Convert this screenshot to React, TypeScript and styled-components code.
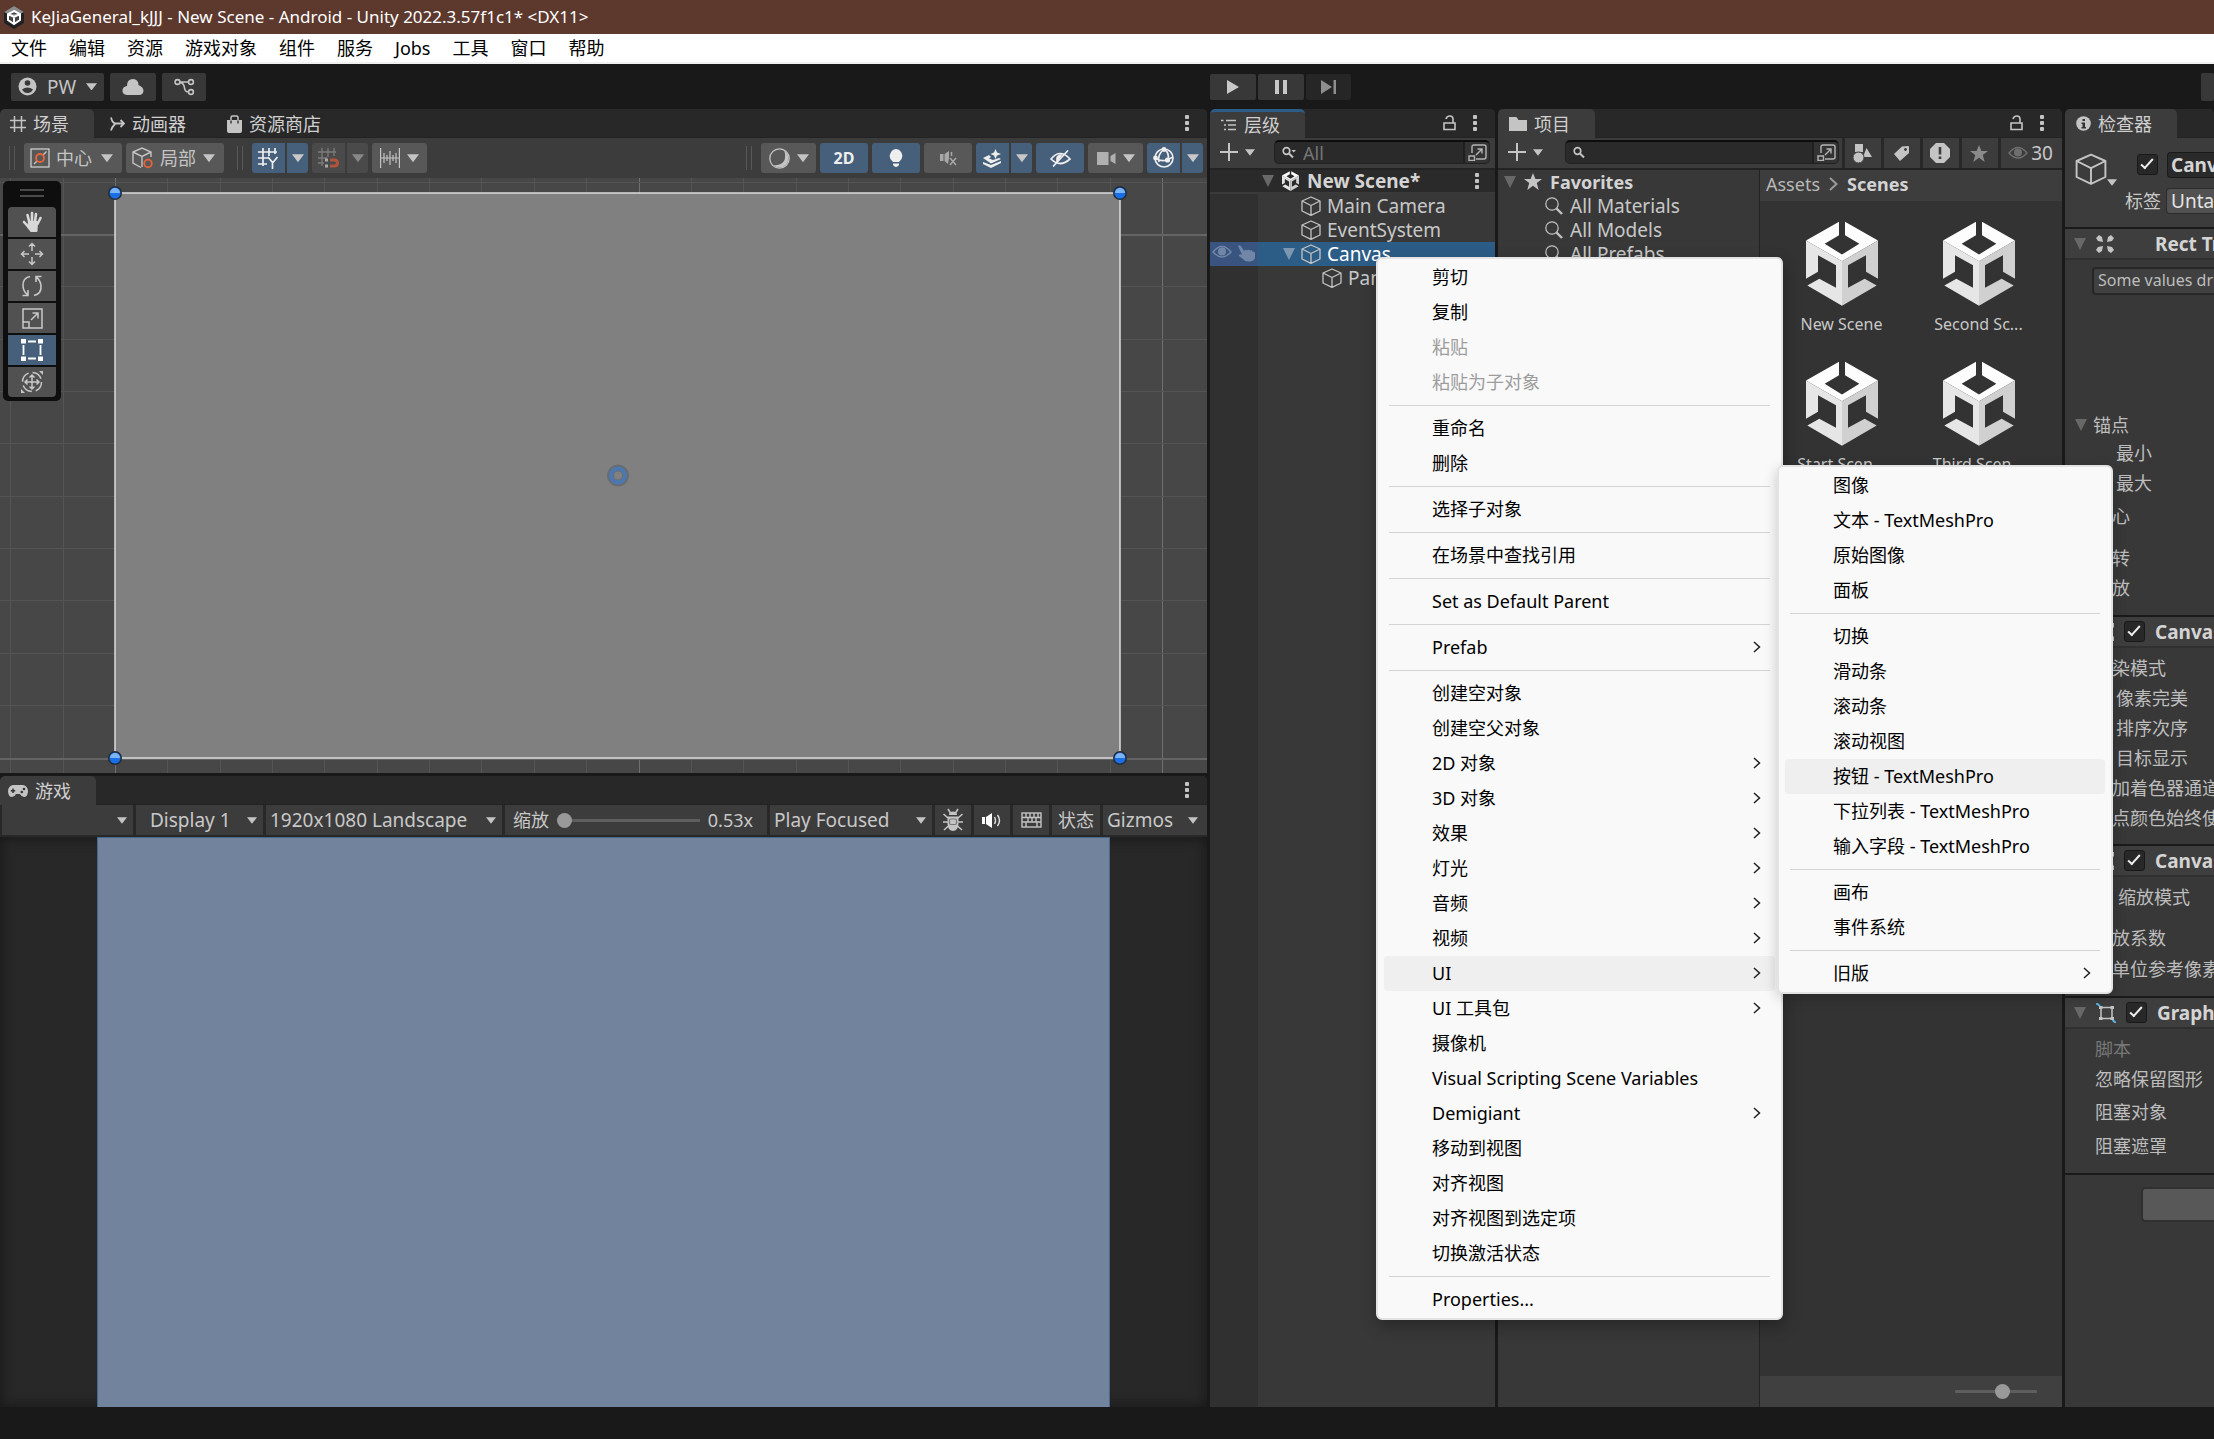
import React from 'react';
import styled, { createGlobalStyle, css } from 'styled-components';

const UI_FONT = '"Noto Sans", "Noto Sans CJK SC", sans-serif';
const COLUMNS = '1207fr 285fr 564fr 149fr';

const Global = createGlobalStyle`
  *, *::before, *::after { box-sizing: border-box; }
  html, body { margin: 0; padding: 0; background: #191919; }
  body { font-family: ${UI_FONT}; font-size: 18px; line-height: 24px; color: #c8c8c8; overflow: hidden; }
  button, input, select { font: inherit; color: inherit; margin: 0; border: 0; background: none; padding: 0; }
  ul { list-style: none; margin: 0; padding: 0; }
  h1, h2, p { margin: 0; font: inherit; }
  svg { display: block; flex: none; }
`;

/* ---------- shell ---------- */

const Shell = styled.div`
  position: relative;
  display: flex;
  flex-direction: column;
  height: 100vh;
  background: #191919;
  overflow: hidden;
`;

const TitleBar = styled.header`
  display: flex;
  align-items: center;
  gap: 7px;
  height: 34px;
  padding: 0 4px;
  background: #5c382d;
  color: #fff;
  font-size: 17px;
  white-space: nowrap;
`;

const MenuBar = styled.nav`
  display: flex;
  align-items: center;
  gap: 22px;
  height: 30px;
  padding: 0 11px;
  background: #fff;
  border-bottom: 2px solid #f0f0f0;
  color: #000;
`;

const MenuBarItem = styled.button`
  line-height: 28px;
  white-space: nowrap;
`;

const TopToolbar = styled.div`
  display: grid;
  grid-template-columns: ${COLUMNS};
  column-gap: 3px;
  align-items: center;
  height: 45px;
`;

const ToolbarGroup = styled.div<{ $gap: number; $pad?: number; $end?: boolean }>`
  display: flex;
  align-items: center;
  gap: ${p => p.$gap}px;
  padding-left: ${p => p.$pad ?? 0}px;
  justify-content: ${p => (p.$end ? 'flex-end' : 'flex-start')};
`;

const DarkButton = styled.button<{ $w: number; $dim?: boolean; $h?: number }>`
  display: flex;
  align-items: center;
  justify-content: center;
  gap: 10px;
  width: ${p => p.$w}px;
  height: ${p => p.$h ?? 28}px;
  background: ${p => (p.$dim ? '#262626' : '#383838')};
  border-radius: 2px;
  color: #c4c4c4;
  font-size: 19px;
`;

const Workspace = styled.main`
  flex: 1;
  min-height: 0;
  display: grid;
  grid-template-columns: ${COLUMNS};
  column-gap: 3px;
`;

const LeftColumn = styled.div`
  display: grid;
  grid-template-rows: 664fr 631fr;
  row-gap: 3px;
  min-width: 0;
  min-height: 0;
`;

const StatusBar = styled.footer`
  height: 32px;
  background: #191919;
`;

/* ---------- panels ---------- */

const Panel = styled.section`
  display: flex;
  flex-direction: column;
  min-width: 0;
  min-height: 0;
  background: #383838;
  border-radius: 5px 5px 0 0;
  overflow: hidden;
`;

const TabStrip = styled.div`
  display: flex;
  align-items: stretch;
  flex: none;
  height: 29px;
  background: #282828;
  border-bottom: 1px solid #232323;
`;

const Tab = styled.button<{ $active?: boolean; $focused?: boolean; $pad?: number }>`
  display: flex;
  align-items: center;
  gap: 7px;
  height: 29px;
  padding: 0 25px 0 ${p => p.$pad ?? 11}px;
  border-radius: 5px 5px 0 0;
  border-top: ${p => (p.$focused ? '3px solid #2c5d87' : '0')};
  background: ${p => (p.$active ? '#3c3c3c' : 'transparent')};
  color: #d0d0d0;
  white-space: nowrap;
`;

const StripActions = styled.div`
  display: flex;
  align-items: center;
  gap: 17px;
  margin-left: auto;
  padding-right: 18px;
`;

const IconButton = styled.button`
  display: flex;
  align-items: center;
  justify-content: center;
`;

const SceneToolbar = styled.div`
  display: flex;
  align-items: center;
  justify-content: space-between;
  flex: none;
  height: 40px;
  padding: 0 4px 0 9px;
  background: #3c3c3c;
`;

const ToolSet = styled.div`
  display: flex;
  align-items: center;
  gap: 4px;
`;

const Grip = styled.span<{ $before?: number }>`
  width: 6px;
  height: 24px;
  margin: 0 5px 0 ${p => p.$before ?? 0}px;
  border: solid #585858;
  border-width: 0 1px;
`;

const ToolButton = styled.button<{ $w: number; $on?: boolean; $off?: boolean; $side?: 'l' | 'r' }>`
  display: flex;
  align-items: center;
  justify-content: center;
  gap: 7px;
  width: ${p => p.$w}px;
  height: 30px;
  background: ${p => (p.$on ? '#46607c' : p.$off ? '#4a4a4a' : '#585858')};
  border-radius: ${p => (p.$side === 'l' ? '3px 0 0 3px' : p.$side === 'r' ? '0 3px 3px 0' : '3px')};
  color: ${p => (p.$on ? '#eee' : p.$off ? '#888' : '#c4c4c4')};
  font-size: 16px;
  font-weight: 700;
`;

const Split = styled.div`
  display: flex;
  gap: 2px;
`;

const PickField = styled.label<{ $w: number }>`
  display: flex;
  align-items: center;
  gap: 6px;
  width: ${p => p.$w}px;
  height: 30px;
  padding: 0 9px 0 6px;
  background: #585858;
  border-radius: 3px;
  color: #c4c4c4;
`;

const Picker = styled.select`
  flex: 1;
  min-width: 0;
  height: 100%;
  appearance: none;
  outline: none;
  text-overflow: clip;
`;

const SceneCanvas = styled.div`
  position: relative;
  flex: 1;
  min-height: 0;
  background: #474747;
  overflow: hidden;
`;

const SceneDrawing = styled.svg`
  width: 100%;
  height: 100%;
`;

const ToolOverlay = styled.div`
  position: absolute;
  left: 3px;
  top: 3px;
  display: flex;
  flex-direction: column;
  gap: 2px;
  padding: 0 5px 4px;
  width: 58px;
  background: #0e0e0e;
  border-radius: 5px;
`;

const OverlayGrip = styled.span`
  align-self: center;
  width: 24px;
  height: 8px;
  margin: 8px 0;
  border: solid #4a4a4a;
  border-width: 2px 0;
`;

const OverlayTool = styled.button<{ $on?: boolean }>`
  display: flex;
  align-items: center;
  justify-content: center;
  height: 30px;
  background: ${p => (p.$on ? '#46607c' : '#515151')};
  color: ${p => (p.$on ? '#fff' : '#c4c4c4')};
  &:nth-of-type(1) { border-radius: 4px 4px 0 0; }
  &:last-child { border-radius: 0 0 4px 4px; }
`;

/* ---------- game view ---------- */

const GameToolbar = styled.div`
  display: flex;
  flex: none;
  gap: 3px;
  height: 32px;
  padding: 0 0 2px 2px;
  background: #282828;
  font-size: 19px;
`;

const GameCell = styled.label<{ $w: number }>`
  display: flex;
  align-items: center;
  flex: none;
  width: ${p => p.$w}px;
  height: 30px;
  padding: 0 6px 0 4px;
  background: #3c3c3c;
  white-space: nowrap;
`;

const DisplayCell = styled(GameCell)`
  padding-left: 14px;
`;

const ScaleCell = styled.label`
  display: flex;
  align-items: center;
  flex: 1;
  gap: 8px;
  height: 30px;
  padding: 0 14px 0 8px;
  background: #3c3c3c;
  font-size: 18px;
  white-space: nowrap;
`;

const GameButton = styled.button<{ $w: number; $spread?: boolean }>`
  display: flex;
  align-items: center;
  justify-content: ${p => (p.$spread ? 'space-between' : 'center')};
  flex: none;
  width: ${p => p.$w}px;
  height: 30px;
  padding: ${p => (p.$spread ? '0 9px 0 4px' : '0')};
  background: #3c3c3c;
  font-size: ${p => (p.$spread ? 19 : 18)}px;
`;

const Slider = styled.input`
  flex: 1;
  min-width: 0;
  height: 16px;
  appearance: none;
  &::-webkit-slider-runnable-track { height: 3px; background: #5e5e5e; }
  &::-webkit-slider-thumb {
    appearance: none;
    width: 15px;
    height: 15px;
    margin-top: -6px;
    border-radius: 50%;
    background: #999;
  }
`;

const GameView = styled.div`
  display: flex;
  justify-content: center;
  flex: 1;
  min-height: 0;
  background: #282828;
  box-shadow: inset 0 0 14px #161616;
`;

const GameFrame = styled.div`
  height: 100%;
  aspect-ratio: 16 / 9;
  background: #71839d;
  border: solid #46678a;
  border-width: 1px 1px 0;
`;

/* ---------- hierarchy ---------- */

const PanelToolbar = styled.div`
  display: flex;
  align-items: center;
  flex: none;
  height: 32px;
  padding: 0 5px 2px 10px;
  background: #3c3c3c;
  border-bottom: 2px solid #232323;
`;

const AddButton = styled.button<{ $after?: number }>`
  display: flex;
  align-items: center;
  gap: 7px;
  margin-right: ${p => p.$after ?? 19}px;
`;

const SearchField = styled.label`
  display: flex;
  align-items: center;
  flex: 1;
  min-width: 0;
  gap: 6px;
  height: 24px;
  padding-left: 7px;
  background: #2a2a2a;
  border: 1px solid #212121;
  border-top: 2px solid #0d0d0d;
  border-radius: 5px;
`;

const SearchInput = styled.input`
  flex: 1;
  min-width: 0;
  height: 20px;
  outline: none;
  &::placeholder { color: #767676; opacity: 1; }
`;

const SearchWindow = styled.button`
  display: flex;
  align-items: center;
  justify-content: center;
  width: 26px;
  height: 21px;
  border-left: 2px solid #202020;
  background: #333;
  border-radius: 0 4px 4px 0;
`;

const SceneRow = styled.div`
  display: flex;
  align-items: center;
  gap: 7px;
  flex: none;
  height: 24px;
  padding: 0 16px 0 52px;
  background: #2a2a2a;
  border-bottom: 2px solid #3a3a3a;
  font-size: 19px;
  font-weight: 700;
  color: #d4d4d4;
`;

const Spacer = styled.span`
  flex: 1;
`;

const Tree = styled.ul`
  flex: 1;
  min-height: 0;
  background: linear-gradient(to right, #303030 48px, #383838 48px);
  font-size: 19px;
`;

const TreeRow = styled.li<{ $depth: number; $selected?: boolean }>`
  display: flex;
  align-items: center;
  gap: 6px;
  height: 24px;
  padding-bottom: 1px;
  padding-left: ${p => (p.$selected ? 2 : 91 + p.$depth * 21)}px;
  white-space: nowrap;
  ${p => p.$selected && css`
    background: linear-gradient(to right, #38547f 48px, #2c5d87 48px);
    color: #fff;
  `}
`;

const RowToggles = styled.span`
  display: flex;
  gap: 6px;
  width: 65px;
  color: #7287a8;
`;

/* ---------- project ---------- */

const ProjectToolbar = styled(PanelToolbar)`
  padding-right: 0;
`;

const FilterSet = styled.div`
  display: flex;
  align-self: stretch;
  margin-left: 3px;
  margin-bottom: -2px;
`;

const FilterButton = styled.button<{ $w: number }>`
  display: flex;
  align-items: center;
  justify-content: center;
  gap: 3px;
  width: ${p => p.$w}px;
  height: 30px;
  padding-right: 2px;
  border-left: 3px solid #282828;
  font-size: 19px;
`;

const ProjectBody = styled.div`
  display: grid;
  grid-template-columns: 262fr 302fr;
  flex: 1;
  min-height: 0;
`;

const Favorites = styled.ul`
  background: #383838;
  border-right: 1px solid #232323;
  min-width: 0;
  font-size: 19px;
`;

const FavoriteHead = styled.li`
  display: flex;
  align-items: center;
  gap: 8px;
  height: 24px;
  padding: 0 0 1px 6px;
  font-size: 18px;
  font-weight: 700;
  color: #d4d4d4;
`;

const FavoriteRow = styled.li`
  display: flex;
  align-items: center;
  gap: 7px;
  height: 24px;
  padding: 0 0 1px 47px;
`;

const AssetPane = styled.div`
  display: flex;
  flex-direction: column;
  min-width: 0;
  background: #333;
`;

const Breadcrumb = styled.nav`
  display: flex;
  align-items: center;
  gap: 9px;
  height: 31px;
  padding: 0 6px 4px;
  background: #3d3d3d;
`;

const Crumb = styled.a<{ $current?: boolean }>`
  color: ${p => (p.$current ? '#d4d4d4' : '#b8b8b8')};
  font-weight: ${p => (p.$current ? 700 : 400)};
  text-decoration: none;
`;

const AssetGrid = styled.div`
  display: grid;
  grid-template-columns: 137px 137px;
  grid-auto-rows: 140px;
  padding: 20px 0 0 13px;
  flex: 1;
`;

const Asset = styled.figure`
  display: flex;
  flex-direction: column;
  align-items: center;
  gap: 7px;
  margin: 0;
  font-size: 16px;
  line-height: 22px;
`;

const AssetFooter = styled.div`
  display: flex;
  justify-content: flex-end;
  align-items: center;
  height: 31px;
  padding-right: 25px;
  background: #404040;
`;

const SizeSlider = styled(Slider)`
  flex: none;
  width: 82px;
`;

/* ---------- inspector ---------- */

const ObjectHeader = styled.div`
  display: flex;
  gap: 8px;
  flex: none;
  height: 91px;
  padding: 14px 0 0 10px;
  background: #3c3c3c;
  border-bottom: 2px solid #1a1a1a;
`;

const ObjectIcon = styled.button`
  display: flex;
  align-items: center;
  height: 34px;
  & > svg:last-child { align-self: flex-end; }
`;

const ObjectFields = styled.div`
  display: flex;
  flex-direction: column;
  align-items: flex-end;
  gap: 11px;
  flex: 1;
  min-width: 0;
`;

const FieldLine = styled.label`
  display: flex;
  align-items: center;
  gap: 5px;
  height: 25px;
  white-space: nowrap;
`;

const CheckBox = styled.input`
  appearance: none;
  flex: none;
  position: relative;
  width: 21px;
  height: 21px;
  background: #282828;
  border: 1px solid #191919;
  border-radius: 3px;
  &:checked::after {
    content: '';
    position: absolute;
    left: 6px;
    top: 1px;
    width: 6px;
    height: 13px;
    border: solid #eee;
    border-width: 0 2px 2px 0;
    transform: rotate(42deg);
  }
`;

const NameInput = styled.input`
  width: 47px;
  height: 26px;
  margin-left: 4px;
  padding-left: 3px;
  background: #2a2a2a;
  border: 1px solid #1a1a1a;
  border-right: 0;
  border-radius: 4px 0 0 4px;
  font-size: 19px;
  font-weight: 700;
  color: #d4d4d4;
`;

const TagSelect = styled.select`
  appearance: none;
  width: 48px;
  height: 26px;
  padding-left: 4px;
  background: #515151;
  border: 1px solid #2c2c2c;
  border-right: 0;
  border-radius: 4px 0 0 4px;
  color: #e4e4e4;
  font-size: 19px;
  text-overflow: clip;
`;

const ComponentHeader = styled.h2`
  display: flex;
  align-items: center;
  flex: none;
  gap: 10px;
  height: 31px;
  padding-left: 9px;
  background: #3e3e3e;
  border-bottom: 2px solid #303030;
  font-size: 19px;
  font-weight: 700;
  color: #d4d4d4;
  white-space: nowrap;
`;

const RectTitle = styled.span`
  margin-left: 31px;
`;

const ComponentBody = styled.div<{ $h: number; $top?: number }>`
  flex: none;
  height: ${p => p.$h}px;
  padding-top: ${p => p.$top ?? 7}px;
  border-bottom: 2px solid #1a1a1a;
`;

const HelpBox = styled.p`
  height: 28px;
  margin: 0 -4px 117px 27px;
  padding-left: 4px;
  background: #404040;
  border: 2px solid #262626;
  border-radius: 4px;
  font-size: 16px;
  line-height: 22px;
  color: #bdbdbd;
  white-space: nowrap;
`;

const PropertyRow = styled.div<{ $indent?: number; $dim?: boolean; $h?: number }>`
  display: flex;
  align-items: center;
  gap: 6px;
  height: ${p => p.$h ?? 30}px;
  padding-left: ${p => p.$indent ?? 29}px;
  color: ${p => (p.$dim ? '#777' : '#bdbdbd')};
  white-space: nowrap;
`;

const AddComponent = styled.button`
  flex: none;
  height: 35px;
  margin: 12px 0 0 76px;
  background: #585858;
  border: 2px solid #303030;
  border-right: 0;
  border-radius: 4px 0 0 4px;
`;

/* ---------- context menus ---------- */

const menuBox = css`
  position: absolute;
  padding: 1px 0;
  background: #f9f9f9;
  border: 2px solid #e3e3e3;
  border-radius: 6px;
  box-shadow: 2px 6px 16px rgba(0, 0, 0, 0.3);
  color: #000;
  cursor: default;
`;

const ContextMenu = styled.ul`
  ${menuBox}
  left: 1376px;
  top: 257px;
  width: 407px;
  z-index: 5;
`;

const SubMenu = styled.ul`
  ${menuBox}
  left: calc(100% - 4px);
  bottom: -3px;
  width: 336px;
  box-shadow: 0 4px 14px rgba(0, 0, 0, 0.2);
`;

const MenuItem = styled.li`
  position: relative;
  padding: 0 6px;
`;

const MenuButton = styled.button<{ $hot?: boolean }>`
  display: flex;
  align-items: center;
  justify-content: space-between;
  width: 100%;
  height: 35px;
  padding: 0 14px 2px 48px;
  border-radius: 4px;
  background: ${p => (p.$hot ? '#efefef' : 'transparent')};
  white-space: nowrap;
  &:disabled { color: #9d9d9d; }
`;

const MenuRule = styled.li`
  height: 11px;
  padding: 5px 11px;
  &::before { content: ''; display: block; height: 1px; background: #d4d4d4; }
`;

/* ---------- icons ---------- */

const Caret = ({ w = 12, c = '#c4c4c4' }: { w?: number; c?: string }) => (
  <svg width={w} height={w * 0.7} viewBox="0 0 12 8"><path d="M0 0h12L6 8z" fill={c} /></svg>
);

const Foldout = ({ c = '#686868' }: { c?: string }) => (
  <svg width="12" height="12" viewBox="0 0 12 12"><path d="M0 0h12L6 12z" fill={c} /></svg>
);

const UnityLogo = ({ w, h }: { w: number; h: number }) => (
  <svg width={w} height={h} viewBox="0 0 216 254">
    <path fill="#fdfdfd" d="M99 2 0 58 108 120 216 58 117 2V42L160 68 108 100 56 68 99 42z" />
    <path fill="#e6e6e6" d="M0 58 108 120V254L4 193 40 173 90 200V132L36 102V152L0 173z" />
    <path fill="#d0d0d0" d="M216 58 108 120V254L212 193 176 173 126 200V132L180 102V152L216 173z" />
  </svg>
);

const AppIcon = () => (
  <svg width="20" height="23" viewBox="0 0 20 23">
    <path d="M10 0 20 6V17L10 23 0 17V6z" fill="#222" />
    <path d="M10 0 20 6 10 11 0 6z" fill="#8b8b8b" />
    <path d="M10 5 16 8V14L10 18 4 14V8zM10 11V18M4 8 10 11 16 8" fill="#444" stroke="#fff" strokeWidth="2" />
  </svg>
);

const Cube = ({ s = 20, w = 1.3 }: { s?: number; w?: number }) => (
  <svg width={s} height={s} viewBox="0 0 20 20" fill="none" stroke="#c4c4c4" strokeWidth={w} strokeLinejoin="round">
    <path d="M10 1 19 5V15L10 19.3 1 15V5zM1 5 10 9.5 19 5M10 9.5V19" />
  </svg>
);

const Dots = () => (
  <svg width="4" height="16" viewBox="0 0 4 16" fill="#c4c4c4">
    <rect width="4" height="4" rx="1" /><rect y="6" width="4" height="4" rx="1" /><rect y="12" width="4" height="4" rx="1" />
  </svg>
);

const Lock = () => (
  <svg width="13" height="16" viewBox="0 0 13 16" fill="none" stroke="#c4c4c4" strokeWidth="1.6">
    <path d="M1 8H12V14.5H1zM3 4C4 0 10 0 10 4V8" />
  </svg>
);

const Plus = () => (
  <svg width="18" height="18" viewBox="0 0 18 18" stroke="#c4c4c4" strokeWidth="2"><path d="M9 0V18M0 9H18" /></svg>
);

const Lens = ({ s = 13, arrow }: { s?: number; arrow?: boolean }) => (
  <svg width={arrow ? s + 2 : s} height={s} viewBox={arrow ? '0 0 15 13' : '0 0 13 13'} fill="none" stroke="#c4c4c4" strokeWidth="1.7">
    <circle cx="4.5" cy="5" r="3.3" /><path d="M7 7.5 11 11.5" strokeWidth="2" />
    {arrow && <path d="M9.500 4H14L11.700 6.500z" fill="#c4c4c4" stroke="none" />}
  </svg>
);

const BigLens = () => (
  <svg width="18" height="18" viewBox="0 0 18 18" fill="none" stroke="#c4c4c4" strokeWidth="1.2">
    <circle cx="7" cy="7" r="6.200" /><path d="M11.500 11.500 17 17" strokeWidth="2.400" />
  </svg>
);

const OpenWindow = () => (
  <svg width="19" height="17" viewBox="0 0 19 17" fill="none" stroke="#b4b4b4" strokeWidth="1.400">
    <path d="M4 9V3Q4 1 6 1H16Q18 1 18 3V13Q18 15 16 15H8M1 12H6.500V16.500H1zM8 11 14 5M9.500 5H14V9.500" />
  </svg>
);

const Eye = ({ c = 'currentColor' }: { c?: string }) => (
  <svg width="20" height="14" viewBox="0 0 20 14" fill="none" stroke={c} strokeWidth="1.400">
    <path d="M1 7Q10-4 19 7Q10 17 1 7z" /><circle cx="10" cy="6.500" r="4" fill={c} stroke="none" />
  </svg>
);

const PointHand = () => (
  <svg width="18" height="17" viewBox="0 0 18 17" fill="currentColor">
    <path d="M0 1Q2-1 3.500 2L6 6Q8 4 9 5.500Q11 4 12 5.500Q14 4.500 14.500 6.500Q17 6 17 8.500V13Q16 16 12 16.500Q7 17 5 14L1 11Q0 9 4 9.500z" />
  </svg>
);

const Star = ({ c = '#c4c4c4' }: { c?: string }) => (
  <svg width="18" height="17" viewBox="0 0 18 17"><path fill={c} d="M9 0 11.400 6H18L12.800 10 14.700 17 9 12.800 3.300 17 5.200 10 0 6H6.600z" /></svg>
);

const Sub = () => (
  <svg width="8" height="12" viewBox="0 0 8 12" fill="none" stroke="#222" strokeWidth="1.500"><path d="M1 1 6.500 6 1 11" /></svg>
);

const PersonIcon = () => (
  <svg width="19" height="19" viewBox="0 0 19 19">
    <circle cx="9.500" cy="9.500" r="9" fill="#c4c4c4" /><circle cx="9.500" cy="6" r="2.800" fill="#383838" />
    <path d="M4 12.500Q9.500 8.500 15 12.500Q13 16 9.500 16Q6 16 4 12.500z" fill="#383838" />
  </svg>
);

const CloudIcon = () => (
  <svg width="22" height="16" viewBox="0 0 22 16" fill="#c4c4c4"><path d="M5 16Q0 15.500 0.500 11Q1 7.500 5 7Q5 0 11 0Q16.500 0.500 16.500 6Q21.500 8 21.500 12Q21 16 17 16z" /></svg>
);

const BranchIcon = () => (
  <svg width="21" height="18" viewBox="0 0 21 18" fill="none" stroke="#c4c4c4" strokeWidth="1.600">
    <circle cx="3.500" cy="4" r="2.400" /><circle cx="17" cy="4" r="2.400" /><circle cx="17" cy="14" r="2.400" /><path d="M6 4H14.500M6 4.500Q10 5 10.500 10Q11 14 14.500 14" />
  </svg>
);

const HashIcon = () => (
  <svg width="16" height="16" viewBox="0 0 16 16" stroke="#c4c4c4" strokeWidth="1.500"><path d="M4.500 0V16M11.500 0V16M0 4.500H16M0 11.500H16" /></svg>
);

const AnimatorIcon = () => (
  <svg width="15" height="14" viewBox="0 0 15 14" fill="none" stroke="#c4c4c4" strokeWidth="1.800">
    <path d="M1 0.500Q2.500 6.500 6 6.500H14M1 13.500Q2 10 5 7M10.500 3 14 6.500 10.500 10" />
  </svg>
);

const BagIcon = () => (
  <svg width="15" height="18" viewBox="0 0 15 18"><path d="M0 5H15V16Q15 18 13 18H2Q0 18 0 16z" fill="#c4c4c4" /><path d="M4 6V2.500Q4 1 5.500 1H9.500Q11 1 11 2.500V6" fill="none" stroke="#c4c4c4" strokeWidth="1.500" /><path d="M4 5.500V8.500M11 5.500V8.500" stroke="#333" strokeWidth="1.400" /></svg>
);

const PivotIcon = () => (
  <svg width="20" height="20" viewBox="0 0 20 20" fill="none" stroke="#c4c4c4" strokeWidth="1.400">
    <rect x="1" y="1" width="18" height="18" /><path d="M4 16 7 13M13 7 16.500 3.500" /><circle cx="10" cy="10" r="4" stroke="#e8653a" strokeWidth="1.800" />
  </svg>
);

const LocalIcon = () => (
  <svg width="22" height="22" viewBox="0 0 22 22" fill="none" stroke="#c4c4c4" strokeWidth="1.400">
    <path d="M19 10V5L10 1 1 5V16L9 20.500M1 5 10 9.500 19 5M10 9.500V20" /><circle cx="16" cy="16.500" r="3.800" stroke="#e8653a" strokeWidth="1.800" />
  </svg>
);

const GridIcon = () => (
  <svg width="21" height="21" viewBox="0 0 21 21" fill="none" stroke="#eee" strokeWidth="1.700">
    <path d="M5 0V18M11 0V8M17 0V6M0 4H19M0 10H10M0 16H9M10 9 14.500 14.500V21M19.500 9 14.500 15" />
  </svg>
);

const SnapIcon = () => (
  <svg width="21" height="20" viewBox="0 0 21 20" fill="none" stroke="#7c7c7c" strokeWidth="1.300">
    <path d="M4 0V18M10 0V9M16 0V8M0 4H18M0 10H9M0 15H6" />
    <path d="M12 12H16Q19.500 12 19.500 15Q19.500 18 16 18H12" stroke="#b0553c" strokeWidth="3" /><path d="M7 12H10M7 18H10" stroke="#aaa" strokeWidth="3" />
  </svg>
);

const RulerIcon = () => (
  <svg width="20" height="20" viewBox="0 0 20 20" stroke="#c4c4c4" strokeWidth="1.200"><path d="M0.600 0V20M19.400 0V20M0 10H20M4 5V15M7 7V13M10 3V17M13 7V13M16 5V15" /></svg>
);

const SphereIcon = () => (
  <svg width="21" height="21" viewBox="0 0 21 21"><circle cx="10.500" cy="10.500" r="9.700" fill="none" stroke="#c4c4c4" strokeWidth="1.300" /><path d="M15 2Q23 9 17 17Q11 22 4 17Q13 18 15.500 12Q17 7 15 2z" fill="#c4c4c4" /></svg>
);

const BulbIcon = () => (
  <svg width="14" height="19" viewBox="0 0 14 19" fill="#eee"><path d="M4 13Q0 10 0.800 6Q2.500 0 7 0Q12 0.500 13.200 6Q14 10 10 13zM4 14.500H10V16Q7 20 4 16z" /></svg>
);

const MuteIcon = () => (
  <svg width="17" height="15" viewBox="0 0 17 15" fill="#a8a8a8"><path d="M0 3H3.500V10H0zM4.500 3 9 0V7L8 13 4.500 10z" /><path d="M10 7 16 14M16 7 10 14M11.500 1V5" stroke="#a8a8a8" strokeWidth="1.500" /></svg>
);

const LayersFx = () => (
  <svg width="20" height="19" viewBox="0 0 20 19" fill="#eee"><path d="M0 9 6 6 8 8 6 9.500 10 11 16 9 18 10 8 14.500zM0 13 8 16 18 12V14L8 19 0 15zM12.500 0 14 3.500 18 5 14 6.500 12.500 10 11 6.500 7.500 5 11 3.500z" /></svg>
);

const HiddenEye = () => (
  <svg width="21" height="17" viewBox="0 0 21 17" fill="none" stroke="#eee" strokeWidth="1.700"><path d="M1 9Q10-2 20 9Q10 18 1 9zM3 16.500 18 0.500" /><path d="M7 8Q8 5 11 5L7 11z" fill="#eee" /></svg>
);

const CameraIcon = () => (
  <svg width="19" height="13" viewBox="0 0 19 13" fill="#b0b0b0"><path d="M0 0H11.500V13H0zM13.500 4 18.500 1V12L13.500 9z" /></svg>
);

const GizmoIcon = () => (
  <svg width="22" height="22" viewBox="0 0 22 22" fill="none" stroke="#eee" strokeWidth="1.600">
    <circle cx="11" cy="11" r="9" /><path d="M11 2Q4 8 6 15M11 2Q17 6 15 14M2 11Q8 15 14 13L20 10" />
    <g fill="#eee" stroke="none"><circle cx="11" cy="2.500" r="2.400" /><circle cx="2.500" cy="11" r="2.400" /><circle cx="14.500" cy="13" r="2.600" /></g>
  </svg>
);

const HandIcon = () => (
  <svg width="21" height="22" viewBox="0 0 21 22" fill="none" stroke="#d8d8d8" strokeLinecap="round" strokeWidth="2.600">
    <path d="M7.500 12 5.500 4M10 11V2M13 11 14 3M15.500 13 18.500 7M6.500 16 2 11" /><path d="M7 11H15L14.500 20H9L6 16z" fill="#d8d8d8" strokeWidth="2" strokeLinejoin="round" />
  </svg>
);

const MoveIcon = () => (
  <svg width="24" height="24" viewBox="0 0 24 24" fill="none" stroke="#c8c8c8" strokeWidth="1.500"><path d="M12 9V1.500M9 4.500 12 1.500 15 4.500M12 15V22.500M9 19.500 12 22.500 15 19.500M9 12H1.500M4.500 9 1.500 12 4.500 15M15 12H22.500M19.500 9 22.500 12 19.500 15" /></svg>
);

const RotateIcon = () => (
  <svg width="22" height="22" viewBox="0 0 22 22" fill="none" stroke="#c8c8c8" strokeWidth="1.600"><path d="M9 1.500Q1.500 3 2 11Q2.500 17 7 20M1.500 20.500H7V15M13 20.500Q20.500 19 20 11Q19.500 5 15 2M20.500 1.500H15V7" /></svg>
);

const ScaleIcon = () => (
  <svg width="21" height="21" viewBox="0 0 21 21" fill="none" stroke="#c8c8c8" strokeWidth="1.500"><path d="M1 1H20V20H1zM1 14H7V20M9 12 16 5M10.500 5H16V10.500" /></svg>
);

const RectIcon = () => (
  <svg width="22" height="22" viewBox="0 0 22 22" stroke="#fff" strokeWidth="1.800"><path d="M2.500 6V16M19.500 6V16M7 2.500H15M7 19.500H15" /><path fill="#fff" stroke="none" d="M0 0H5V4.500H0zM17 0H22V4.500H17zM0 17.500H5V22H0zM17 17.500H22V22H17z" /></svg>
);

const TransformIcon = () => (
  <svg width="24" height="24" viewBox="0 0 24 24" fill="none" stroke="#c8c8c8" strokeWidth="1.500"><circle cx="12" cy="12" r="9.500" strokeDasharray="11 4" /><path d="M12 5V19M5 12H19M9.500 7.500 12 5 14.500 7.500M9.500 16.500 12 19 14.500 16.500M7.500 9.500 5 12 7.500 14.500M16.500 9.500 19 12 16.500 14.500" /><path d="M19 1H23V5zM1 19V23H5z" fill="#c8c8c8" stroke="none" /></svg>
);

const GamepadIcon = () => (
  <svg width="20" height="12" viewBox="0 0 20 12"><path d="M5 0H15Q20 1 20 6.500Q19.500 12 16 12Q13 11.500 12 9H8Q7 11.500 4 12Q0.500 12 0 6.500Q0 1 5 0z" fill="#c4c4c4" /><path d="M5 3.500V8M2.800 5.700H7.200" stroke="#333" strokeWidth="1.500" /><circle cx="16" cy="4" r="1.300" fill="#333" /><circle cx="13.800" cy="7" r="1.300" fill="#333" /></svg>
);

const BugIcon = () => (
  <svg width="22" height="24" viewBox="0 0 22 24" fill="none" stroke="#c4c4c4" strokeWidth="1.600"><path d="M6 1 8.500 5M16 1 13.500 5M1.500 6 6 10M20.500 6 16 10M1 14H6M21 14H16M2 22 6.500 18M20 22 15.500 18" /><path d="M7 7Q7 3.500 11 3.500Q15 3.500 15 7zM5.500 8.500H16.500V16Q16 23 11 23Q6 23 5.500 16z" fill="#c4c4c4" stroke="none" /><rect x="7.500" y="11" width="7" height="5.500" rx="1.500" fill="#c4c4c4" stroke="#777" strokeWidth="1.200" /></svg>
);

const SpeakerIcon = () => (
  <svg width="20" height="15" viewBox="0 0 20 15" fill="#fff"><path d="M0 4H3V11H0zM4 4 10 0V15L4 11z" /><path d="M12.500 4Q14.500 7.500 12.500 11M15.500 2Q19.500 7.500 15.500 13" fill="none" stroke="#ddd" strokeWidth="1.500" /></svg>
);

const KeyboardIcon = () => (
  <svg width="21" height="16" viewBox="0 0 21 16" fill="none" stroke="#c4c4c4" strokeWidth="1.400"><rect x="1" y="1" width="19" height="14" /><path d="M1 5.500H20M1 10H20M5 1V5.500M9 1V5.500M13 1V5.500M17 1V5.500M7 5.500V10M11 5.500V10M15 5.500V10M5 10V15M16 10V15" /></svg>
);

const ListIcon = () => (
  <svg width="16" height="12" viewBox="0 0 16 12" stroke="#c4c4c4" strokeWidth="1.500"><path d="M0 1.500H2.500M5 1.500H15M3 6H5M7 6H15M3 10.500H5M7 10.500H15" /></svg>
);

const FolderIcon = () => (
  <svg width="18" height="14" viewBox="0 0 18 14" fill="#c4c4c4"><path d="M0 0H7.500L9.500 3H18V14H0z" /></svg>
);

const InfoIcon = () => (
  <svg width="15" height="15" viewBox="0 0 15 15"><circle cx="7.500" cy="7.500" r="7.300" fill="#c4c4c4" /><path d="M6.500 3H9V5H6.500zM5.500 6.500H9V11H10V12.500H5.500V11H6.500V8H5.500z" fill="#333" /></svg>
);

const ShapesIcon = () => (
  <svg width="19" height="19" viewBox="0 0 19 19" fill="#c4c4c4"><rect x="2" width="8" height="8" /><path d="M13.500 4 19 13H10z" /><circle cx="5.500" cy="13.500" r="5.500" stroke="#3c3c3c" /></svg>
);

const TagIcon = () => (
  <svg width="15" height="15" viewBox="0 0 15 15"><path d="M8 0.500 14 0Q15 0 15 1V7L6 15 0 8z" fill="#c4c4c4" /><circle cx="11.500" cy="3.500" r="1.400" fill="#3c3c3c" /></svg>
);

const AlertIcon = () => (
  <svg width="20" height="20" viewBox="0 0 20 20"><path d="M6 0H14L20 6V14L14 20H6L0 14V6z" fill="#c4c4c4" /><path d="M8.700 4H11.300V11.500H8.700zM8.700 13.500H11.300V16H8.700z" fill="#3c3c3c" /></svg>
);

const RectTransformIcon = () => (
  <svg width="18" height="18" viewBox="0 0 18 18" fill="#c4c4c4"><path d="M0 3 3 0 6 2 7 7 2 6zM18 3 15 0 12 2 11 7 16 6zM0 15 3 18 6 16 7 11 2 12zM18 15 15 18 12 16 11 11 16 12z" /></svg>
);

const CanvasIcon = () => (
  <svg width="18" height="18" viewBox="0 0 18 18" fill="none" stroke="#c4c4c4" strokeWidth="1.500"><path d="M2.500 2.500H15.500V15.500H2.500z" /><path d="M0 0H4.500V4.500H0zM13.500 0H18V4.500H13.500zM0 13.500H4.500V18H0zM13.500 13.500H18V18H13.500z" fill="#c4c4c4" stroke="none" /></svg>
);

const RaycasterIcon = () => (
  <svg width="20" height="20" viewBox="0 0 20 20" fill="none" stroke="#c4c4c4" strokeWidth="1.500"><path d="M5 4.500H16V15.500H5z" /><path d="M3 3H6.500V6H3zM14.500 3H18V6H14.500zM3 14H6.500V17H3zM14.500 14H18V17H14.500z" fill="#c4c4c4" stroke="none" /><path d="M0 0 4 3M16.500 17 20 20" stroke="#5ab6e8" strokeWidth="2" /></svg>
);

const CrumbArrow = () => (
  <svg width="9" height="14" viewBox="0 0 9 14" fill="none" stroke="#9a9a9a" strokeWidth="2"><path d="M1 1 7.500 7 1 13" /></svg>
);

/* ---------- scene drawing ---------- */

const STEP = 52.35;

const SceneView = () => {
  const columns = Array.from({ length: 23 }, (_, i) => i - 2);
  const rows = Array.from({ length: 12 }, (_, i) => i - 1);
  const corners = [[115, 15], [1120, 15], [115, 580], [1120, 580]];
  return (
    <SceneDrawing viewBox="0 0 1207 595" preserveAspectRatio="xMinYMin slice" shapeRendering="auto">
      {columns.map(i => (
        <rect key={`c${i}`} x={Math.round(115 + i * STEP)} y="0" width="1" height="595" fill={i % 10 === 0 ? '#707070' : '#545454'} />
      ))}
      {rows.map(i => (
        <rect key={`r${i}`} x="0" y={Math.round(56 + i * STEP)} width="1207" height={i % 10 === 0 ? 2 : 1} fill={i % 10 === 0 ? '#646464' : '#545454'} />
      ))}
      <rect x="115" y="15" width="1005" height="565" fill="#808080" stroke="#dcdcdc" strokeWidth="1.500" />
      {corners.map(([x, y]) => (
        <g key={`${x}-${y}`}>
          <circle cx={x} cy={y} r="7" fill="#222c3a" />
          <circle cx={x} cy={y} r="5.500" fill="#1a6fe6" />
          <path d={`M${x - 5} ${y}A5 5 0 0 1 ${x + 5} ${y}z`} fill="#7db4f5" />
        </g>
      ))}
      <circle cx="618" cy="297.500" r="7.500" fill="none" stroke="#696d73" strokeWidth="7" />
      <circle cx="618" cy="297.500" r="7" fill="none" stroke="#4c78b2" strokeWidth="4" />
    </SceneDrawing>
  );
};

/* ---------- data ---------- */

type Entry = { label: string; sub?: boolean; off?: boolean; hot?: boolean; children?: Entry[][] };

const UI_GROUPS: Entry[][] = [
  [{ label: '图像' }, { label: '文本 - TextMeshPro' }, { label: '原始图像' }, { label: '面板' }],
  [
    { label: '切换' }, { label: '滑动条' }, { label: '滚动条' }, { label: '滚动视图' },
    { label: '按钮 - TextMeshPro', hot: true }, { label: '下拉列表 - TextMeshPro' }, { label: '输入字段 - TextMeshPro' },
  ],
  [{ label: '画布' }, { label: '事件系统' }],
  [{ label: '旧版', sub: true }],
];

const MENU_GROUPS: Entry[][] = [
  [{ label: '剪切' }, { label: '复制' }, { label: '粘贴', off: true }, { label: '粘贴为子对象', off: true }],
  [{ label: '重命名' }, { label: '删除' }],
  [{ label: '选择子对象' }],
  [{ label: '在场景中查找引用' }],
  [{ label: 'Set as Default Parent' }],
  [{ label: 'Prefab', sub: true }],
  [
    { label: '创建空对象' }, { label: '创建空父对象' }, { label: '2D 对象', sub: true }, { label: '3D 对象', sub: true },
    { label: '效果', sub: true }, { label: '灯光', sub: true }, { label: '音频', sub: true }, { label: '视频', sub: true },
    { label: 'UI', sub: true, hot: true, children: UI_GROUPS }, { label: 'UI 工具包', sub: true }, { label: '摄像机' },
    { label: 'Visual Scripting Scene Variables' }, { label: 'Demigiant', sub: true }, { label: '移动到视图' },
    { label: '对齐视图' }, { label: '对齐视图到选定项' }, { label: '切换激活状态' },
  ],
  [{ label: 'Properties...' }],
];

const MenuEntries = ({ groups }: { groups: Entry[][] }) => (
  <>
    {groups.map((group, g) => (
      <React.Fragment key={g}>
        {g > 0 && <MenuRule role="separator" />}
        {group.map(item => (
          <MenuItem key={item.label} role="none">
            <MenuButton role="menuitem" disabled={item.off} $hot={item.hot}>
              {item.label}
              {item.sub && <Sub />}
            </MenuButton>
            {item.children && (
              <SubMenu role="menu">
                <MenuEntries groups={item.children} />
              </SubMenu>
            )}
          </MenuItem>
        ))}
      </React.Fragment>
    ))}
  </>
);

const SplitTool = ({ icon, on, off, label }: { icon: React.ReactNode; on?: boolean; off?: boolean; label: string }) => (
  <Split>
    <ToolButton $w={33} $on={on} $off={off} $side="l" aria-label={label}>{icon}</ToolButton>
    <ToolButton $w={21} $on={on} $off={off} $side="r" aria-label={`${label} options`}><Caret c={off ? '#888' : '#c8c8c8'} /></ToolButton>
  </Split>
);

/* ---------- panels ---------- */

const ScenePanel = () => (
  <Panel>
    <TabStrip>
      <Tab $active $pad={10}><HashIcon />场景</Tab>
      <Tab $pad={16}><AnimatorIcon />动画器</Tab>
      <Tab $pad={16}><BagIcon />资源商店</Tab>
      <StripActions><IconButton aria-label="Scene options"><Dots /></IconButton></StripActions>
    </TabStrip>
    <SceneToolbar>
      <ToolSet>
        <Grip />
        <PickField $w={98}><PivotIcon /><Picker aria-label="Pivot"><option>中心</option></Picker><Caret /></PickField>
        <PickField $w={98}><LocalIcon /><Picker aria-label="Handle rotation"><option>局部</option></Picker><Caret /></PickField>
        <Grip $before={9} />
        <SplitTool label="Grid" icon={<GridIcon />} on />
        <SplitTool label="Snap" icon={<SnapIcon />} off />
        <ToolButton $w={55} aria-label="Increment snapping"><RulerIcon /><Caret /></ToolButton>
      </ToolSet>
      <ToolSet>
        <Grip />
        <ToolButton $w={55} aria-label="Draw mode"><SphereIcon /><Caret /></ToolButton>
        <ToolButton $w={48} $on>2D</ToolButton>
        <ToolButton $w={48} $on aria-label="Lighting"><BulbIcon /></ToolButton>
        <ToolButton $w={48} aria-label="Audio"><MuteIcon /></ToolButton>
        <SplitTool label="Effects" icon={<LayersFx />} on />
        <ToolButton $w={48} $on aria-label="Visibility"><HiddenEye /></ToolButton>
        <ToolButton $w={55} aria-label="Camera"><CameraIcon /><Caret /></ToolButton>
        <SplitTool label="Gizmos" icon={<GizmoIcon />} on />
      </ToolSet>
    </SceneToolbar>
    <SceneCanvas>
      <SceneView />
      <ToolOverlay>
        <OverlayGrip />
        <OverlayTool aria-label="View"><HandIcon /></OverlayTool>
        <OverlayTool aria-label="Move"><MoveIcon /></OverlayTool>
        <OverlayTool aria-label="Rotate"><RotateIcon /></OverlayTool>
        <OverlayTool aria-label="Scale"><ScaleIcon /></OverlayTool>
        <OverlayTool $on aria-label="Rect"><RectIcon /></OverlayTool>
        <OverlayTool aria-label="Transform"><TransformIcon /></OverlayTool>
      </ToolOverlay>
    </SceneCanvas>
  </Panel>
);

const GamePanel = () => (
  <Panel>
    <TabStrip>
      <Tab $active $pad={8}><GamepadIcon />游戏</Tab>
      <StripActions><IconButton aria-label="Game options"><Dots /></IconButton></StripActions>
    </TabStrip>
    <GameToolbar>
      <GameCell $w={131}><Picker aria-label="View type" /><Caret w={10} /></GameCell>
      <DisplayCell $w={127}><Picker aria-label="Display"><option>Display 1</option></Picker><Caret w={10} /></DisplayCell>
      <GameCell $w={236}><Picker aria-label="Resolution"><option>1920x1080 Landscape</option></Picker><Caret w={10} /></GameCell>
      <ScaleCell>缩放<Slider type="range" min="0" max="100" defaultValue="0" />0.53x</ScaleCell>
      <GameCell $w={162}><Picker aria-label="Play mode"><option>Play Focused</option></Picker><Caret w={10} /></GameCell>
      <GameButton $w={36} aria-label="Debug"><BugIcon /></GameButton>
      <GameButton $w={36} aria-label="Mute"><SpeakerIcon /></GameButton>
      <GameButton $w={36} aria-label="Shortcuts"><KeyboardIcon /></GameButton>
      <GameButton $w={48}>状态</GameButton>
      <GameButton $w={104} $spread>Gizmos<Caret w={10} /></GameButton>
    </GameToolbar>
    <GameView><GameFrame /></GameView>
  </Panel>
);

const HierarchyPanel = () => (
  <Panel>
    <TabStrip>
      <Tab $active $focused><ListIcon />层级</Tab>
      <StripActions>
        <IconButton aria-label="Lock"><Lock /></IconButton>
        <IconButton aria-label="Hierarchy options"><Dots /></IconButton>
      </StripActions>
    </TabStrip>
    <PanelToolbar>
      <AddButton aria-label="Create"><Plus /><Caret w={10} /></AddButton>
      <SearchField>
        <Lens arrow />
        <SearchInput placeholder="All" aria-label="Search hierarchy" />
        <SearchWindow aria-label="Open search"><OpenWindow /></SearchWindow>
      </SearchField>
    </PanelToolbar>
    <SceneRow>
      <Foldout /><UnityLogo w={19} h={20} />New Scene*<Spacer />
      <IconButton aria-label="Scene menu"><Dots /></IconButton>
    </SceneRow>
    <Tree>
      <TreeRow $depth={0}><Cube />Main Camera</TreeRow>
      <TreeRow $depth={0}><Cube />EventSystem</TreeRow>
      <TreeRow $depth={0} $selected><RowToggles><Eye /><PointHand /></RowToggles><Foldout c="#7d97b0" /><Cube />Canvas</TreeRow>
      <TreeRow $depth={1}><Cube />Panel</TreeRow>
    </Tree>
  </Panel>
);

const ProjectPanel = () => (
  <Panel>
    <TabStrip>
      <Tab $active><FolderIcon />项目</Tab>
      <StripActions>
        <IconButton aria-label="Lock"><Lock /></IconButton>
        <IconButton aria-label="Project options"><Dots /></IconButton>
      </StripActions>
    </TabStrip>
    <ProjectToolbar>
      <AddButton $after={22} aria-label="Create"><Plus /><Caret w={10} /></AddButton>
      <SearchField>
        <Lens />
        <SearchInput aria-label="Search project" />
        <SearchWindow aria-label="Open search"><OpenWindow /></SearchWindow>
      </SearchField>
      <FilterSet>
        <FilterButton $w={39} aria-label="Filter by type"><ShapesIcon /></FilterButton>
        <FilterButton $w={39} aria-label="Filter by label"><TagIcon /></FilterButton>
        <FilterButton $w={39} aria-label="Filter by log"><AlertIcon /></FilterButton>
        <FilterButton $w={39} aria-label="Save search"><Star c="#8a8a8a" /></FilterButton>
        <FilterButton $w={64}><Eye c="#6e6e6e" />30</FilterButton>
      </FilterSet>
    </ProjectToolbar>
    <ProjectBody>
      <Favorites>
        <FavoriteHead><Foldout /><Star />Favorites</FavoriteHead>
        <FavoriteRow><BigLens />All Materials</FavoriteRow>
        <FavoriteRow><BigLens />All Models</FavoriteRow>
        <FavoriteRow><BigLens />All Prefabs</FavoriteRow>
      </Favorites>
      <AssetPane>
        <Breadcrumb>
          <Crumb href="#assets">Assets</Crumb><CrumbArrow /><Crumb href="#scenes" $current>Scenes</Crumb>
        </Breadcrumb>
        <AssetGrid>
          {['New Scene', 'Second Sc...', 'Start Scen...', 'Third Scen...'].map(name => (
            <Asset key={name}><UnityLogo w={72} h={85} /><figcaption>{name}</figcaption></Asset>
          ))}
        </AssetGrid>
        <AssetFooter><SizeSlider type="range" min="0" max="100" defaultValue="60" aria-label="Icon size" /></AssetFooter>
      </AssetPane>
    </ProjectBody>
  </Panel>
);

const InspectorPanel = () => (
  <Panel>
    <TabStrip><Tab $active><InfoIcon />检查器</Tab></TabStrip>
    <ObjectHeader>
      <ObjectIcon aria-label="Select icon"><Cube s={32} w={1.2} /><Caret w={10} /></ObjectIcon>
      <ObjectFields>
        <FieldLine>
          <CheckBox type="checkbox" defaultChecked aria-label="Active" />
          <NameInput defaultValue="Canvas" aria-label="Name" />
        </FieldLine>
        <FieldLine>标签<TagSelect><option>Untagged</option></TagSelect></FieldLine>
      </ObjectFields>
    </ObjectHeader>
    <ComponentHeader><Foldout /><RectTransformIcon /><RectTitle>Rect Transform</RectTitle></ComponentHeader>
    <ComponentBody $h={357}>
      <HelpBox>Some values driven by Canvas.</HelpBox>
      <PropertyRow $indent={10} $h={26}><Foldout />锚点</PropertyRow>
      <PropertyRow $indent={51}>最小</PropertyRow>
      <PropertyRow $indent={51}>最大</PropertyRow>
      <PropertyRow $h={36}>轴心</PropertyRow>
      <PropertyRow $h={48}>旋转</PropertyRow>
      <PropertyRow $h={12}>缩放</PropertyRow>
    </ComponentBody>
    <ComponentHeader><Foldout /><CanvasIcon /><CheckBox type="checkbox" defaultChecked aria-label="Canvas enabled" />Canvas</ComponentHeader>
    <ComponentBody $h={198} $top={5}>
      <PropertyRow>渲染模式</PropertyRow>
      <PropertyRow $indent={51}>像素完美</PropertyRow>
      <PropertyRow $indent={51}>排序次序</PropertyRow>
      <PropertyRow $indent={51}>目标显示</PropertyRow>
      <PropertyRow>附加着色器通道</PropertyRow>
      <PropertyRow>顶点颜色始终使用</PropertyRow>
    </ComponentBody>
    <ComponentHeader><Foldout /><CanvasIcon /><CheckBox type="checkbox" defaultChecked aria-label="Canvas Scaler enabled" />Canvas Scaler</ComponentHeader>
    <ComponentBody $h={121} $top={5}>
      <PropertyRow $h={30}>UI 缩放模式</PropertyRow>
      <PropertyRow $h={52}>缩放系数</PropertyRow>
      <PropertyRow $h={10}>每单位参考像素数</PropertyRow>
    </ComponentBody>
    <ComponentHeader><Foldout /><RaycasterIcon /><CheckBox type="checkbox" defaultChecked aria-label="Graphic Raycaster enabled" />Graphic Raycaster</ComponentHeader>
    <ComponentBody $h={146} $top={5}>
      <PropertyRow $indent={30} $dim>脚本</PropertyRow>
      <PropertyRow $indent={30}>忽略保留图形</PropertyRow>
      <PropertyRow $indent={30} $h={36}>阻塞对象</PropertyRow>
      <PropertyRow $indent={30} $h={32}>阻塞遮罩</PropertyRow>
    </ComponentBody>
    <AddComponent aria-label="Add component" />
  </Panel>
);

export default function App() {
  return (
    <>
      <Global />
      <Shell>
        <TitleBar><AppIcon /><h1>KeJiaGeneral_kJJJ - New Scene - Android - Unity 2022.3.57f1c1* &lt;DX11&gt;</h1></TitleBar>
        <MenuBar>
          {['文件', '编辑', '资源', '游戏对象', '组件', '服务', 'Jobs', '工具', '窗口', '帮助'].map(name => (
            <MenuBarItem key={name}>{name}</MenuBarItem>
          ))}
        </MenuBar>
        <TopToolbar>
          <ToolbarGroup $gap={6} $pad={11}>
            <DarkButton $w={93}><PersonIcon />PW<Caret w={11} /></DarkButton>
            <DarkButton $w={46} aria-label="Cloud"><CloudIcon /></DarkButton>
            <DarkButton $w={44} aria-label="Version control"><BranchIcon /></DarkButton>
          </ToolbarGroup>
          <ToolbarGroup $gap={2}>
            <DarkButton $w={46} $h={26} aria-label="Play"><svg width="12" height="14" viewBox="0 0 12 14"><path d="M0 0 12 7 0 14z" fill="#c8c8c8" /></svg></DarkButton>
            <DarkButton $w={46} $h={26} aria-label="Pause"><svg width="12" height="14" viewBox="0 0 12 14"><path d="M0 0H4V14H0zM8 0H12V14H8z" fill="#c8c8c8" /></svg></DarkButton>
            <DarkButton $w={45} $h={26} $dim aria-label="Step"><svg width="15" height="14" viewBox="0 0 15 14"><path d="M0 0 11 7 0 14zM12.500 0H15V14H12.500z" fill="#8e8e8e" /></svg></DarkButton>
          </ToolbarGroup>
          <span />
          <ToolbarGroup $gap={0} $end><DarkButton $w={13} aria-label="Search" /></ToolbarGroup>
        </TopToolbar>
        <Workspace>
          <LeftColumn>
            <ScenePanel />
            <GamePanel />
          </LeftColumn>
          <HierarchyPanel />
          <ProjectPanel />
          <InspectorPanel />
        </Workspace>
        <StatusBar />
        <ContextMenu role="menu"><MenuEntries groups={MENU_GROUPS} /></ContextMenu>
      </Shell>
    </>
  );
}
